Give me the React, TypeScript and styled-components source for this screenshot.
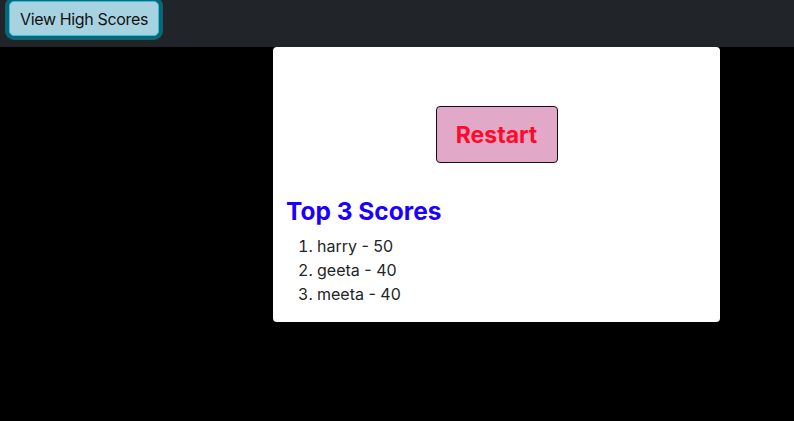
import React from 'react'
import styled, { createGlobalStyle } from 'styled-components'

const GlobalStyle = createGlobalStyle`
  html, body {
    margin: 0;
    padding: 0;
    background: #000;
    font-family: Inter, "Noto Sans", "Liberation Sans", sans-serif;
  }
  * { box-sizing: border-box; }
`

const Page = styled.div`
  min-height: 421px;
  background: #000;
`

const TopBar = styled.div`
  height: 47px;
  background: #212529;
  padding: 1px 0 0 9px;
`

const ScoresButton = styled.button`
  height: 35px;
  padding: 0 10px;
  font-family: inherit;
  font-size: 16px;
  letter-spacing: -0.35px;
  color: #111;
  background: #a7d3e1;
  border: 1px solid #2fc2e0;
  border-radius: 5px;
  box-shadow: 0 0 0 4px #0b6676;
  cursor: pointer;
`

const Card = styled.div`
  margin-left: 273px;
  width: 447px;
  background: #fff;
  border-radius: 4px;
  padding: 59px 13px 0;
`

const Center = styled.div`
  display: flex;
  justify-content: center;
`

const RestartButton = styled.button`
  width: 122px;
  height: 57px;
  font-family: inherit;
  font-size: 23px;
  font-weight: 700;
  color: #ff0a2a;
  background: #e2a8c7;
  border: 1px solid #111;
  border-radius: 4px;
  cursor: pointer;
`

const Title = styled.h4`
  margin: 34px 0 8px;
  font-size: 24.5px;
  line-height: 1.2;
  font-weight: 700;
  color: #1c00ff;
`

const ScoreList = styled.ol`
  margin: 0;
  padding: 0 0 16px 31px;
`

const ScoreItem = styled.li`
  font-size: 16px;
  line-height: 24px;
  color: #212529;
`

const scores = [
  { name: 'harry', score: 50 },
  { name: 'geeta', score: 40 },
  { name: 'meeta', score: 40 },
]

const App = () => (
  <>
    <GlobalStyle />
    <Page>
      <TopBar>
        <ScoresButton>View High Scores</ScoresButton>
      </TopBar>
      <Card>
        <Center>
          <RestartButton>Restart</RestartButton>
        </Center>
        <Title>Top 3 Scores</Title>
        <ScoreList>
          {scores.map((s) => (
            <ScoreItem key={s.name}>
              {s.name} - {s.score}
            </ScoreItem>
          ))}
        </ScoreList>
      </Card>
    </Page>
  </>
)

export default App
